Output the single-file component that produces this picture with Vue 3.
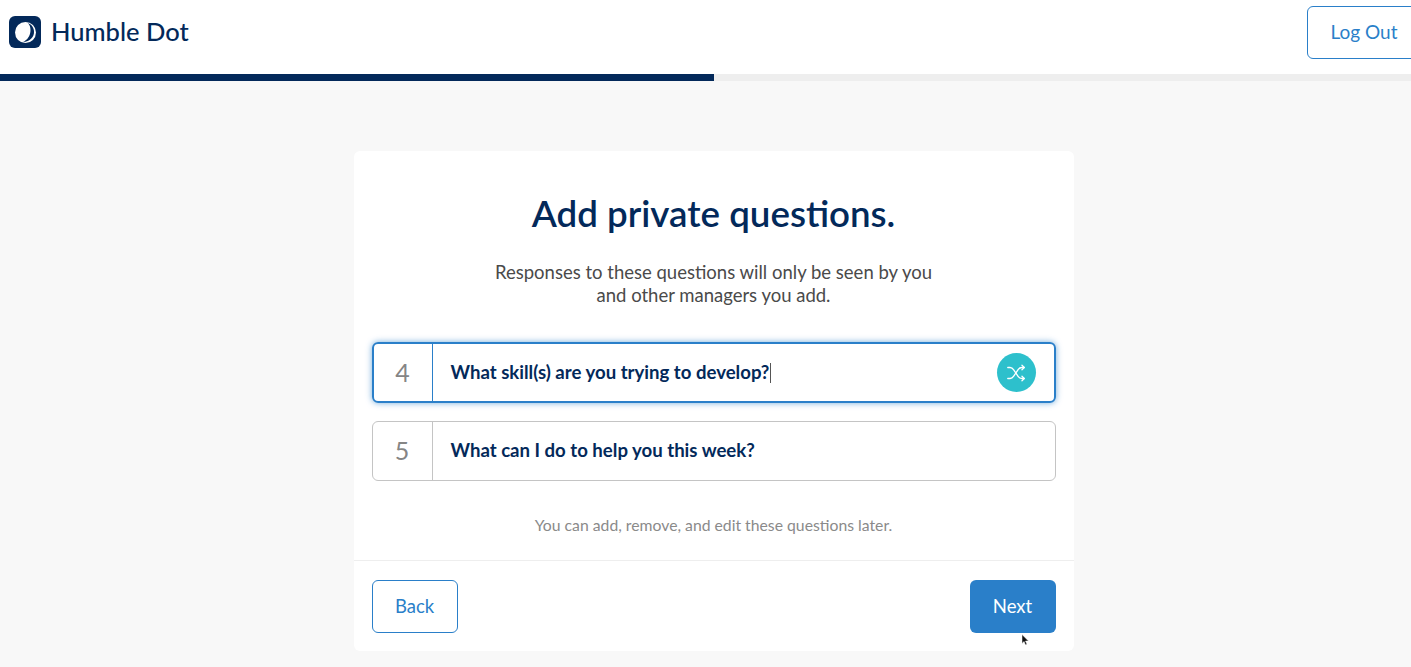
<template>
  <div class="page">
    <header class="top-bar">
      <div class="brand">
        <svg class="logo" width="32" height="32" viewBox="0 0 32 32">
          <rect width="32" height="32" rx="6" fill="#03295a" />
          <circle cx="16.500" cy="16.500" r="10.500" fill="#fff" />
          <path d="M18 6.500C23 9 23.500 22 14 26C21 25.500 25.500 21 25 15C24.700 11 22 8 18 6.500Z" fill="#03295a" />
        </svg>
        <span class="brand-name">Humble Dot</span>
      </div>
      <button class="btn btn-outline logout">Log Out</button>
    </header>
    <div class="progress"><div class="progress-fill" :style="{ width: progress + '%' }"></div></div>

    <main class="content">
      <section class="card">
        <div class="card-body">
          <h1>Add private questions.</h1>
          <p class="sub">Responses to these questions will only be seen by you<br />and other managers you add.</p>
          <div class="questions">
            <div v-for="q in questions" :key="q.num" class="question" :class="{ active: q.active }">
              <div class="num">{{ q.num }}</div>
              <div class="text">
                <span>{{ q.text }}</span><i v-if="q.active" class="caret"></i>
              </div>
              <div v-if="q.active" class="shuffle">
                <svg width="22" height="22" viewBox="0 0 24 24" fill="none" stroke="#fff" stroke-width="1.400" stroke-linecap="round" stroke-linejoin="round">
                  <path d="M3 6h2.500c2 0 3 1 4 2.500l5 7.500c1 1.500 2 2 4 2H21" />
                  <path d="M3 18h2.500c2 0 3-1 4-2.500l5-7.500c1-1.500 2-2 4-2H21" />
                  <path d="M18.500 3.500 21 6l-2.500 2.500" />
                  <path d="M18.500 15.500 21 18l-2.500 2.500" />
                </svg>
              </div>
            </div>
          </div>
          <p class="hint">You can add, remove, and edit these questions later.</p>
        </div>
        <footer class="card-footer">
          <button class="btn btn-outline back">Back</button>
          <button class="btn btn-primary next">
            Next
            <svg class="pointer" width="9" height="12" viewBox="0 0 9 12">
              <path d="M1 0.500V9.500L3 7.500L4.500 11L6 10.300L4.500 7H7.500Z" fill="#111" stroke="#fff" stroke-width="0.500" />
            </svg>
          </button>
        </footer>
      </section>
    </main>
  </div>
</template>

<script setup>
const progress = 50.6

const questions = [
  { num: 4, text: 'What skill(s) are you trying to develop?', active: true },
  { num: 5, text: 'What can I do to help you this week?', active: false }
]
</script>

<style>
html,
body {
  margin: 0;
  overflow: hidden;
}
</style>

<style scoped>
.page {
  height: 667px;
  overflow: hidden;
  background: #f8f8f8;
  font-family: 'Lato', 'Noto Sans', sans-serif;
  color: #03295a;
}

.top-bar {
  display: flex;
  justify-content: space-between;
  align-items: center;
  height: 74px;
  padding: 0 0 10px 9px;
  box-sizing: border-box;
  background: #fff;
  overflow: hidden;
}

.brand {
  display: flex;
  align-items: center;
  gap: 10px;
}

.brand-name {
  margin-bottom: 2px;
  font-size: 25.500px;
  line-height: 30px;
  font-weight: 500;
}

.btn {
  height: 53px;
  border-radius: 6px;
  font-family: inherit;
  font-size: 18.500px;
  cursor: pointer;
  box-sizing: border-box;
}

.btn-outline {
  background: #fff;
  border: 1.500px solid #2a7fc9;
  color: #2a7fc9;
}

.logout {
  flex: none;
  width: 114px;
  margin-right: -10px;
  margin-top: 1px;
  padding-bottom: 3px;
  font-size: 19px;
}

.progress {
  height: 7px;
  background: #eeeeee;
}

.progress-fill {
  height: 100%;
  background: #03295a;
}

.content {
  display: flex;
  justify-content: center;
  padding: 70px 0 0 16px;
}

.card {
  width: 720px;
  height: 500px;
  background: #fff;
  border-radius: 6px;
  display: flex;
  flex-direction: column;
}

.card-body {
  height: 410px;
  padding: 0 18px;
  box-sizing: border-box;
  text-align: center;
  border-bottom: 1px solid #eeeeee;
}

h1 {
  margin: 0;
  padding-top: 40px;
  font-size: 36.700px;
  line-height: 44px;
  font-weight: 600;
}

.sub {
  margin: 26px 0 0;
  font-size: 18.500px;
  line-height: 23px;
  color: #4a4a4a;
}

.questions {
  display: flex;
  flex-direction: column;
  gap: 18px;
  margin-top: 35px;
}

.question {
  display: flex;
  align-items: center;
  height: 60px;
  border: 1px solid #c4c4c4;
  border-radius: 6px;
  box-sizing: border-box;
  text-align: left;
}

.question.active {
  height: 61px;
  border: 2px solid #2a7fc9;
  box-shadow: 0 0 6px rgba(42, 127, 201, 0.65);
}

.num {
  flex: none;
  width: 60px;
  height: 100%;
  display: flex;
  align-items: center;
  justify-content: center;
  padding-bottom: 2px;
  box-sizing: border-box;
  border-right: 1px solid #c4c4c4;
  font-size: 25px;
  color: #858585;
}

.active .num {
  width: 59px;
  border-right-color: #2a7fc9;
}

.text {
  flex: 1;
  padding: 0 0 2px 18px;
  font-size: 18.600px;
  font-weight: 700;
}

.caret {
  display: inline-block;
  width: 1px;
  height: 20px;
  margin-left: 1px;
  vertical-align: -4px;
  background: #555;
}

.shuffle {
  flex: none;
  width: 39px;
  height: 39px;
  margin-right: 18px;
  border-radius: 50%;
  background: #2dc0cc;
  display: flex;
  align-items: center;
  justify-content: center;
}

.hint {
  margin: 34px 0 0;
  font-size: 15.750px;
  line-height: 20px;
  color: #8a8a8a;
}

.card-footer {
  display: flex;
  justify-content: space-between;
  padding: 19px 18px 0;
}

.back {
  width: 86px;
  padding-bottom: 2px;
}

.next {
  position: relative;
  width: 86px;
  padding-bottom: 2px;
  border: none;
  background: #2a7fc9;
  color: #fff;
}

.pointer {
  position: absolute;
  left: 51px;
  top: 54px;
}
</style>
